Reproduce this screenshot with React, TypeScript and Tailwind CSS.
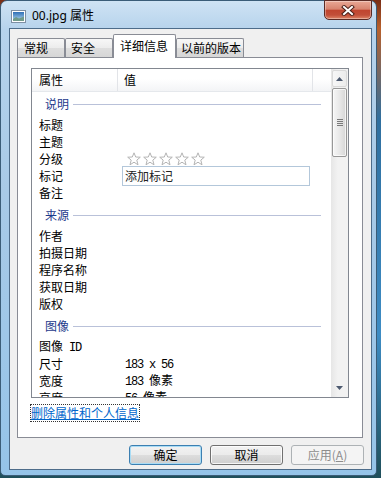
import React from 'react';

const cjk = "font-['Noto_Sans_CJK_SC','Noto_Sans',sans-serif]";
const mono = "font-['Liberation_Mono',monospace] text-[12px] tracking-[-1.2px]";

type Row = { label: React.ReactNode; kind?: 'stars' | 'tag'; value?: React.ReactNode };

const groups: { title: string; rows: Row[] }[] = [
  {
    title: '说明',
    rows: [{ label: '标题' }, { label: '主题' }, { label: '分级', kind: 'stars' }, { label: '标记', kind: 'tag' }, { label: '备注' }],
  },
  {
    title: '来源',
    rows: [{ label: '作者' }, { label: '拍摄日期' }, { label: '程序名称' }, { label: '获取日期' }, { label: '版权' }],
  },
  {
    title: '图像',
    rows: [
      { label: <>图像<span className={mono}> ID</span></> },
      { label: '尺寸', value: <span className={mono}>183 x 56</span> },
      { label: '宽度', value: <><span className={mono}>183 </span>像素</> },
      { label: '高度', value: <><span className={mono}>56 </span>像素</> },
    ],
  },
];

function Star() {
  return (
    <svg width="14" height="14" viewBox="0 0 14 14">
      <polygon
        points="7,0.8 8.7,5 13.3,5.2 9.8,8.1 11,12.8 7,10.2 3,12.8 4.2,8.1 0.7,5.2 5.3,5"
        fill="#fff"
        stroke="#b4b4b4"
        strokeWidth="1"
        strokeLinejoin="round"
      />
    </svg>
  );
}

function AppIcon() {
  return (
    <svg width="15" height="13" viewBox="0 0 15 13">
      <defs>
        <linearGradient id="sky" x1="0" y1="0" x2="0" y2="1">
          <stop offset="0" stopColor="#2f6fb6" />
          <stop offset="1" stopColor="#b7dcf2" />
        </linearGradient>
      </defs>
      <rect x="0.5" y="0.5" width="14" height="12" fill="#fff" stroke="#7d8fa3" />
      <rect x="2" y="2" width="11" height="9" fill="url(#sky)" />
      <path d="M2 9 L5 7 L8 8.5 L13 6.5 L13 11 L2 11 Z" fill="#6f9a8a" />
    </svg>
  );
}

function CloseButton() {
  return (
    <div className="-mt-px flex h-[20px] w-[48px] items-center justify-center rounded-b-[5px] border border-[#5a2b25] bg-[linear-gradient(to_bottom,#e9a896_0%,#d7846f_45%,#c0452f_52%,#c24f39_78%,#de8567_100%)] shadow-[inset_0_0_0_1px_rgba(255,255,255,0.35)]">
      <svg width="14" height="11" viewBox="0 0 14 11">
        <path d="M3 2 L11 9 M11 2 L3 9" stroke="#4b2019" strokeWidth="4" strokeLinecap="square" />
        <path d="M3 2 L11 9 M11 2 L3 9" stroke="#fff" strokeWidth="2" strokeLinecap="square" />
      </svg>
    </div>
  );
}

function Scrollbar() {
  return (
    <div className="flex w-[17px] shrink-0 flex-col bg-[linear-gradient(to_right,#e6e6e6,#f2f2f2_40%,#f2f2f2)]">
      <div className="mx-px mt-px flex h-[17px] items-center justify-center rounded-[2px] border border-[#d9d9d9] bg-[linear-gradient(to_right,#f7f7f7,#ececec)]">
        <svg width="7" height="4" viewBox="0 0 7 4">
          <polygon points="3.5,0 7,4 0,4" fill="#4d5a70" />
        </svg>
      </div>
      <div className="mx-px mt-px flex h-[69px] flex-col items-center justify-center gap-[1px] rounded-[2px] border border-[#979797] bg-[linear-gradient(to_right,#f6f6f6,#e8e8e8_50%,#d6d6d6)] shadow-[inset_0_0_0_1px_rgba(255,255,255,0.7)]">
        <div className="h-px w-[6px] bg-[#7a7a7a]" />
        <div className="h-px w-[6px] bg-[#7a7a7a]" />
        <div className="h-px w-[6px] bg-[#7a7a7a]" />
        <div className="h-px w-[6px] bg-[#7a7a7a]" />
      </div>
      <div className="flex-1" />
      <div className="mx-px mb-px flex h-[17px] items-center justify-center">
        <svg width="7" height="4" viewBox="0 0 7 4">
          <polygon points="0,0 7,0 3.5,4" fill="#4d5a70" />
        </svg>
      </div>
    </div>
  );
}

function PropertyList() {
  return (
    <div className="ml-[13px] mt-[10px] flex h-[330px] w-[318px] border border-[#828790] bg-white">
      <div className="flex-1 overflow-hidden">
        {/* header */}
        <div className="flex h-[23px] border-b border-[#e5e8ec] bg-[linear-gradient(to_bottom,#ffffff,#ffffff_45%,#f3f4f6)]">
          <div className="flex w-[86px] items-center border-r border-[#e2e4e8] pl-[7px] leading-[16px]">属性</div>
          <div className="flex w-[195px] items-center border-r border-[#e2e4e8] pl-[6px] leading-[16px]">值</div>
        </div>

        <div className="pt-[2px]">
          {groups.map((g, gi) => (
            <div key={g.title} className={gi === 0 ? '' : 'mt-[4px]'}>
              <div className="flex h-[22px] items-start pl-[13px] pr-[10px]">
                <span className="leading-[20px] text-[#1d3a8c]">{g.title}</span>
                <div className="ml-[4px] mt-[10px] h-px flex-1 bg-[#b9c1d9]" />
              </div>
              {g.rows.map((r, ri) => (
                <div key={ri} className="flex h-[17px] items-center leading-[17px]">
                  <div className="w-[93px] shrink-0 pl-[7px]">{r.label}</div>
                  {r.kind === 'stars' && (
                    <div className="ml-[2px] flex gap-[2px]">
                      <Star />
                      <Star />
                      <Star />
                      <Star />
                      <Star />
                    </div>
                  )}
                  {r.kind === 'tag' && (
                    <div className="-ml-[3px] flex h-[20px] w-[188px] items-center border border-[#b3c7da] pl-[2px] text-[#222]">
                      添加标记
                    </div>
                  )}
                  {r.value && <div>{r.value}</div>}
                </div>
              ))}
            </div>
          ))}
        </div>
      </div>
      <Scrollbar />
    </div>
  );
}

function Btn({ children, kind }: { children: React.ReactNode; kind: 'default' | 'normal' | 'disabled' }) {
  if (kind === 'disabled') {
    return (
      <div className="flex h-[20px] w-[73px] items-center justify-center rounded-[3px] border border-[#adb2b5] bg-[#f4f4f4] leading-[16px] text-[#8d8d8d]">
        {children}
      </div>
    );
  }
  return (
    <div
      className={
        kind === 'default'
          ? 'flex h-[20px] w-[73px] items-center justify-center rounded-[3px] border border-[#3c7fb1] bg-[linear-gradient(to_bottom,#f2f2f2_0%,#ebebeb_50%,#dddddd_51%,#cfcfcf_100%)] leading-[16px] shadow-[inset_0_0_0_1px_#a9dcf5]'
          : 'flex h-[20px] w-[73px] items-center justify-center rounded-[3px] border border-[#707070] bg-[linear-gradient(to_bottom,#f2f2f2_0%,#ebebeb_50%,#dddddd_51%,#cfcfcf_100%)] leading-[16px] shadow-[inset_0_0_0_1px_rgba(255,255,255,0.8)]'
      }
    >
      {children}
    </div>
  );
}

export default function App() {
  return (
    <div
      className={`relative h-[478px] w-[381px] overflow-hidden bg-[linear-gradient(to_bottom,#7a2e16_0%,#b8602c_6%,#2f6f9f_25%,#3d8cc4_70%,#1f4f5a_100%)] text-[12px] text-black ${cjk}`}
    >
      <div className="flex h-[476px] w-[377px] flex-col rounded-b-[5px] rounded-t-[7px] border border-[#3b5d78] bg-[linear-gradient(to_bottom,#cfe3f4_0%,#b6d3ec_6%,#a8cae7_40%,#95c4e9_100%)] pb-[5px] pl-[8px] pr-[4px]">
        {/* title bar */}
        <div className="flex h-[27px] shrink-0 items-start justify-between">
          <div className="ml-[2px] mt-[8px] flex items-center gap-[6px]">
            <AppIcon />
            <span className="font-['Noto_Sans','Noto_Sans_CJK_SC',sans-serif] leading-[14px]">00.jpg 属性</span>
          </div>
          <CloseButton />
        </div>

        {/* client area */}
        <div className="flex flex-1 flex-col border border-[#4d6c8a] bg-[#f0f0f0] pl-[7px] pr-[8px] pt-[5px]">
          {/* tabs */}
          <div className="flex h-[23px] items-end">
            <div className="flex h-[19px] w-[48px] items-center rounded-t-[2px] border border-b-0 border-[#898c95] bg-[linear-gradient(to_bottom,#f7f7f7,#ececec_50%,#dedede_51%,#d6d6d6)] pl-[6px] leading-[16px]">
              常规
            </div>
            <div className="flex h-[19px] w-[48px] items-center rounded-t-[2px] border border-b-0 border-[#898c95] bg-[linear-gradient(to_bottom,#f7f7f7,#ececec_50%,#dedede_51%,#d6d6d6)] pl-[5px] leading-[16px]">
              安全
            </div>
            <div className="relative z-10 -mb-px h-[24px] w-[63px] rounded-t-[2px] border border-b-0 border-[#898c95] bg-white pl-[6px] pt-[3px] leading-[16px]">
              详细信息
            </div>
            <div className="flex h-[19px] w-[68px] items-center rounded-t-[2px] border border-b-0 border-[#898c95] bg-[linear-gradient(to_bottom,#f7f7f7,#ececec_50%,#dedede_51%,#d6d6d6)] pl-[4px] leading-[16px]">
              以前的版本
            </div>
          </div>

          {/* tab page */}
          <div className="flex h-[381px] flex-col border border-[#898c95] bg-white">
            <PropertyList />
            <div className="ml-[13px] mt-[7px] flex">
              <span className="leading-[16px] text-[#0066cc] underline outline-1 outline-dotted outline-[#333]">删除属性和个人信息</span>
            </div>
          </div>

          {/* buttons */}
          <div className="-mr-px mt-[7px] flex justify-end gap-[8px]">
            <Btn kind="default">确定</Btn>
            <Btn kind="normal">取消</Btn>
            <Btn kind="disabled">
              应用(<span className="underline">A</span>)
            </Btn>
          </div>
        </div>
      </div>
    </div>
  );
}
